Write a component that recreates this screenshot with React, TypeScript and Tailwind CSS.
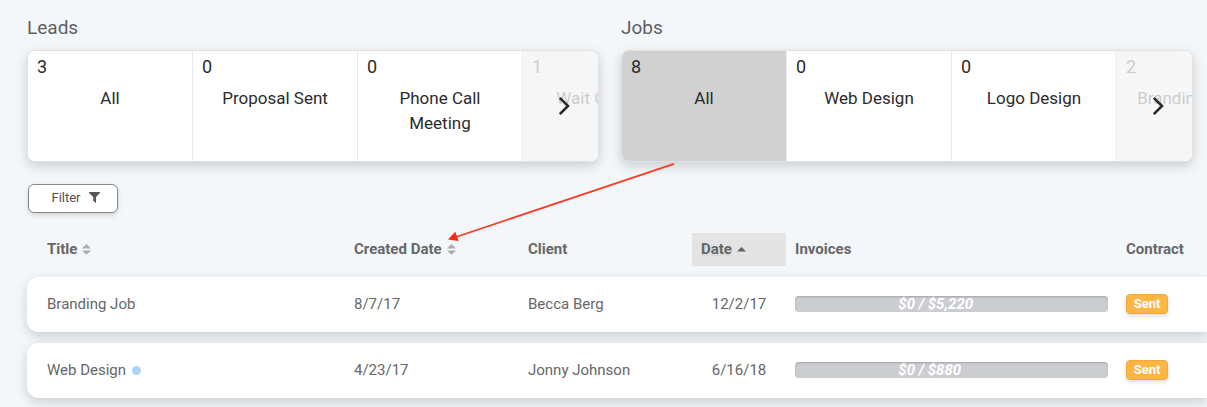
type Stage = {
    count: number;
    label: string;
    active?: boolean;
};

const leads: Stage[] = [
    { count: 3, label: 'All' },
    { count: 0, label: 'Proposal Sent' },
    { count: 0, label: 'Phone Call Meeting' },
    { count: 1, label: 'Wait Contact' },
];

const jobs: Stage[] = [
    { count: 8, label: 'All', active: true },
    { count: 0, label: 'Web Design' },
    { count: 0, label: 'Logo Design' },
    { count: 2, label: 'Branding Design' },
];

const rows = [
    { title: 'Branding Job', isNew: false, created: '8/7/17', client: 'Becca Berg', date: '12/2/17', invoices: '$0 / $5,220', contract: 'Sent' },
    { title: 'Web Design', isNew: true, created: '4/23/17', client: 'Jonny Johnson', date: '6/16/18', invoices: '$0 / $880', contract: 'Sent' },
];

const SortIcon = () => (
    <svg viewBox="0 0 9 11" className="w-[9px] h-[11px] fill-[#a9abad]" aria-hidden="true">
        <path d="M4.5 0 9 4.4H0z" />
        <path d="M0 6.4h9L4.5 10.8z" />
    </svg>
);

const Pipeline = ({ title, stages }: { title: string; stages: Stage[] }) => (
    <section className="flex-1 min-w-0">
        <h2 className="text-[19px] leading-[26px] mb-[9px] text-[#5f6062]">{title}</h2>
        <div className="relative flex overflow-hidden rounded-lg border border-[#dfe1e3] bg-white shadow-[0_4px_12px_rgba(0,0,0,0.17)]">
            {stages.map((stage) => (
                <button
                    key={stage.label}
                    className={`flex flex-col items-start w-[165px] h-[110px] shrink-0 border-r border-[#ebebeb] px-[9px] pt-1 text-[#2b2b2b] ${stage.active ? 'bg-[#d1d1d1]' : 'bg-white'}`}
                >
                    <span className="text-lg leading-6">{stage.count}</span>
                    <span className="w-full px-1 mt-[7px] text-center text-[17px] leading-[25px]">{stage.label}</span>
                </button>
            ))}
            <button
                aria-label={`More ${title}`}
                className="absolute inset-y-0 right-0 w-[77px] pl-[9px] flex items-center justify-center bg-[#f4f4f4]/80"
            >
                <svg viewBox="0 0 12 20" className="w-3 h-5 fill-none stroke-[#2b2b2b]" strokeWidth="2.6" aria-hidden="true">
                    <path d="M1.8 1.8 10 10l-8.2 8.2" />
                </svg>
            </button>
        </div>
    </section>
);

const App: React.FC = () => {
    return (
        <main className="relative min-h-screen overflow-hidden bg-[#f3f7fa] pt-[15px] pl-[27px] font-['Roboto','Liberation_Sans',sans-serif] text-[15px] text-[#666768]">
            <div className="flex gap-[22px] pr-[14px]">
                <Pipeline title="Leads" stages={leads} />
                <Pipeline title="Jobs" stages={jobs} />
            </div>

            <button className="mt-[22px] ml-px flex items-center justify-center gap-2 w-[90px] h-[29px] pl-[5px] pb-0.5 rounded-md border border-[#858688] bg-white text-[13px] text-[#4f5052] shadow-[0_2px_5px_rgba(0,0,0,0.15)]">
                Filter
                <svg viewBox="0 0 11 11" className="w-[11px] h-[11px] fill-[#55565a]" aria-hidden="true">
                    <path d="M.4 0h10.2c.5 0 .6.6.3.9L7 4.9V11L4.2 8.8V4.9L.1.9C-.2.6 0 0 .4 0z" />
                </svg>
            </button>

            <table className="w-full mt-[9px] -mb-3 table-fixed border-separate border-spacing-x-0 border-spacing-y-[11px]">
                <colgroup>
                    <col className="w-[318px]" />
                    <col className="w-[174px]" />
                    <col className="w-[173px]" />
                    <col className="w-[94px]" />
                    <col />
                    <col className="w-[90px]" />
                </colgroup>
                <thead>
                    <tr className="h-[33px] text-left">
                        <th className="pl-5 font-bold">
                            <button className="flex items-center gap-[5px]">Title <SortIcon /></button>
                        </th>
                        <th className="pl-[9px] font-bold">
                            <button className="flex items-center gap-[5px]">Created Date <SortIcon /></button>
                        </th>
                        <th className="pl-[9px] font-bold">Client</th>
                        <th className="pl-[9px] font-bold bg-[#e4e4e4]" aria-sort="ascending">
                            <button className="flex items-center gap-[5px] text-shadow-[0_2px_2px_rgba(0,0,0,0.08)]">
                                Date
                                <svg viewBox="0 0 9 5" className="w-[9px] h-[5px] fill-[#5f6062]" aria-hidden="true">
                                    <path d="M4.5 0 9 4.4H0z" />
                                </svg>
                            </button>
                        </th>
                        <th className="pl-[9px] font-bold">Invoices</th>
                        <th className="pl-[9px] font-bold">Contract</th>
                    </tr>
                </thead>
                <tbody>
                    {rows.map((row) => (
                        <tr key={row.title} className="h-[55px] rounded-l-xl shadow-[0_4px_12px_rgba(0,0,0,0.17)]">
                            <td className="pl-5 bg-white rounded-l-xl">
                                <span className="flex items-center gap-[6px]">
                                    {row.title}
                                    {row.isNew && <span className="w-[9px] h-[9px] rounded-full bg-[#a9d6f2]" />}
                                </span>
                            </td>
                            <td className="pl-[9px] bg-white">{row.created}</td>
                            <td className="pl-[9px] bg-white">{row.client}</td>
                            <td className="bg-white text-center">{row.date}</td>
                            <td className="px-[9px] pb-0.5 bg-white">
                                <div className="h-4 pl-[33%] rounded bg-[#cccdd1] font-bold italic leading-4 text-white shadow-[inset_0_1px_2px_rgba(0,0,0,0.2)]">
                                    {row.invoices}
                                </div>
                            </td>
                            <td className="pl-[9px] pb-0.5 bg-white">
                                <span className="flex items-center justify-center w-[42px] h-5 rounded border border-[#f3a93a] bg-[#fdb544] text-[13px] font-bold text-white shadow-[0_2px_4px_rgba(0,0,0,0.15)]">
                                    {row.contract}
                                </span>
                            </td>
                        </tr>
                    ))}
                </tbody>
            </table>

            {/* Callout arrow pointing at the Created Date sorter */}
            <svg viewBox="0 0 230 82" className="absolute left-[446px] top-[161px] w-[230px] h-[82px] pointer-events-none" aria-hidden="true">
                <path d="M228 2.8 10 76" stroke="#fb3a20" strokeWidth="1.8" />
                <path d="M2 78.6 9.2 70.8 12.8 80z" fill="#fb2a14" />
            </svg>
        </main>
    );
};

export default App;
